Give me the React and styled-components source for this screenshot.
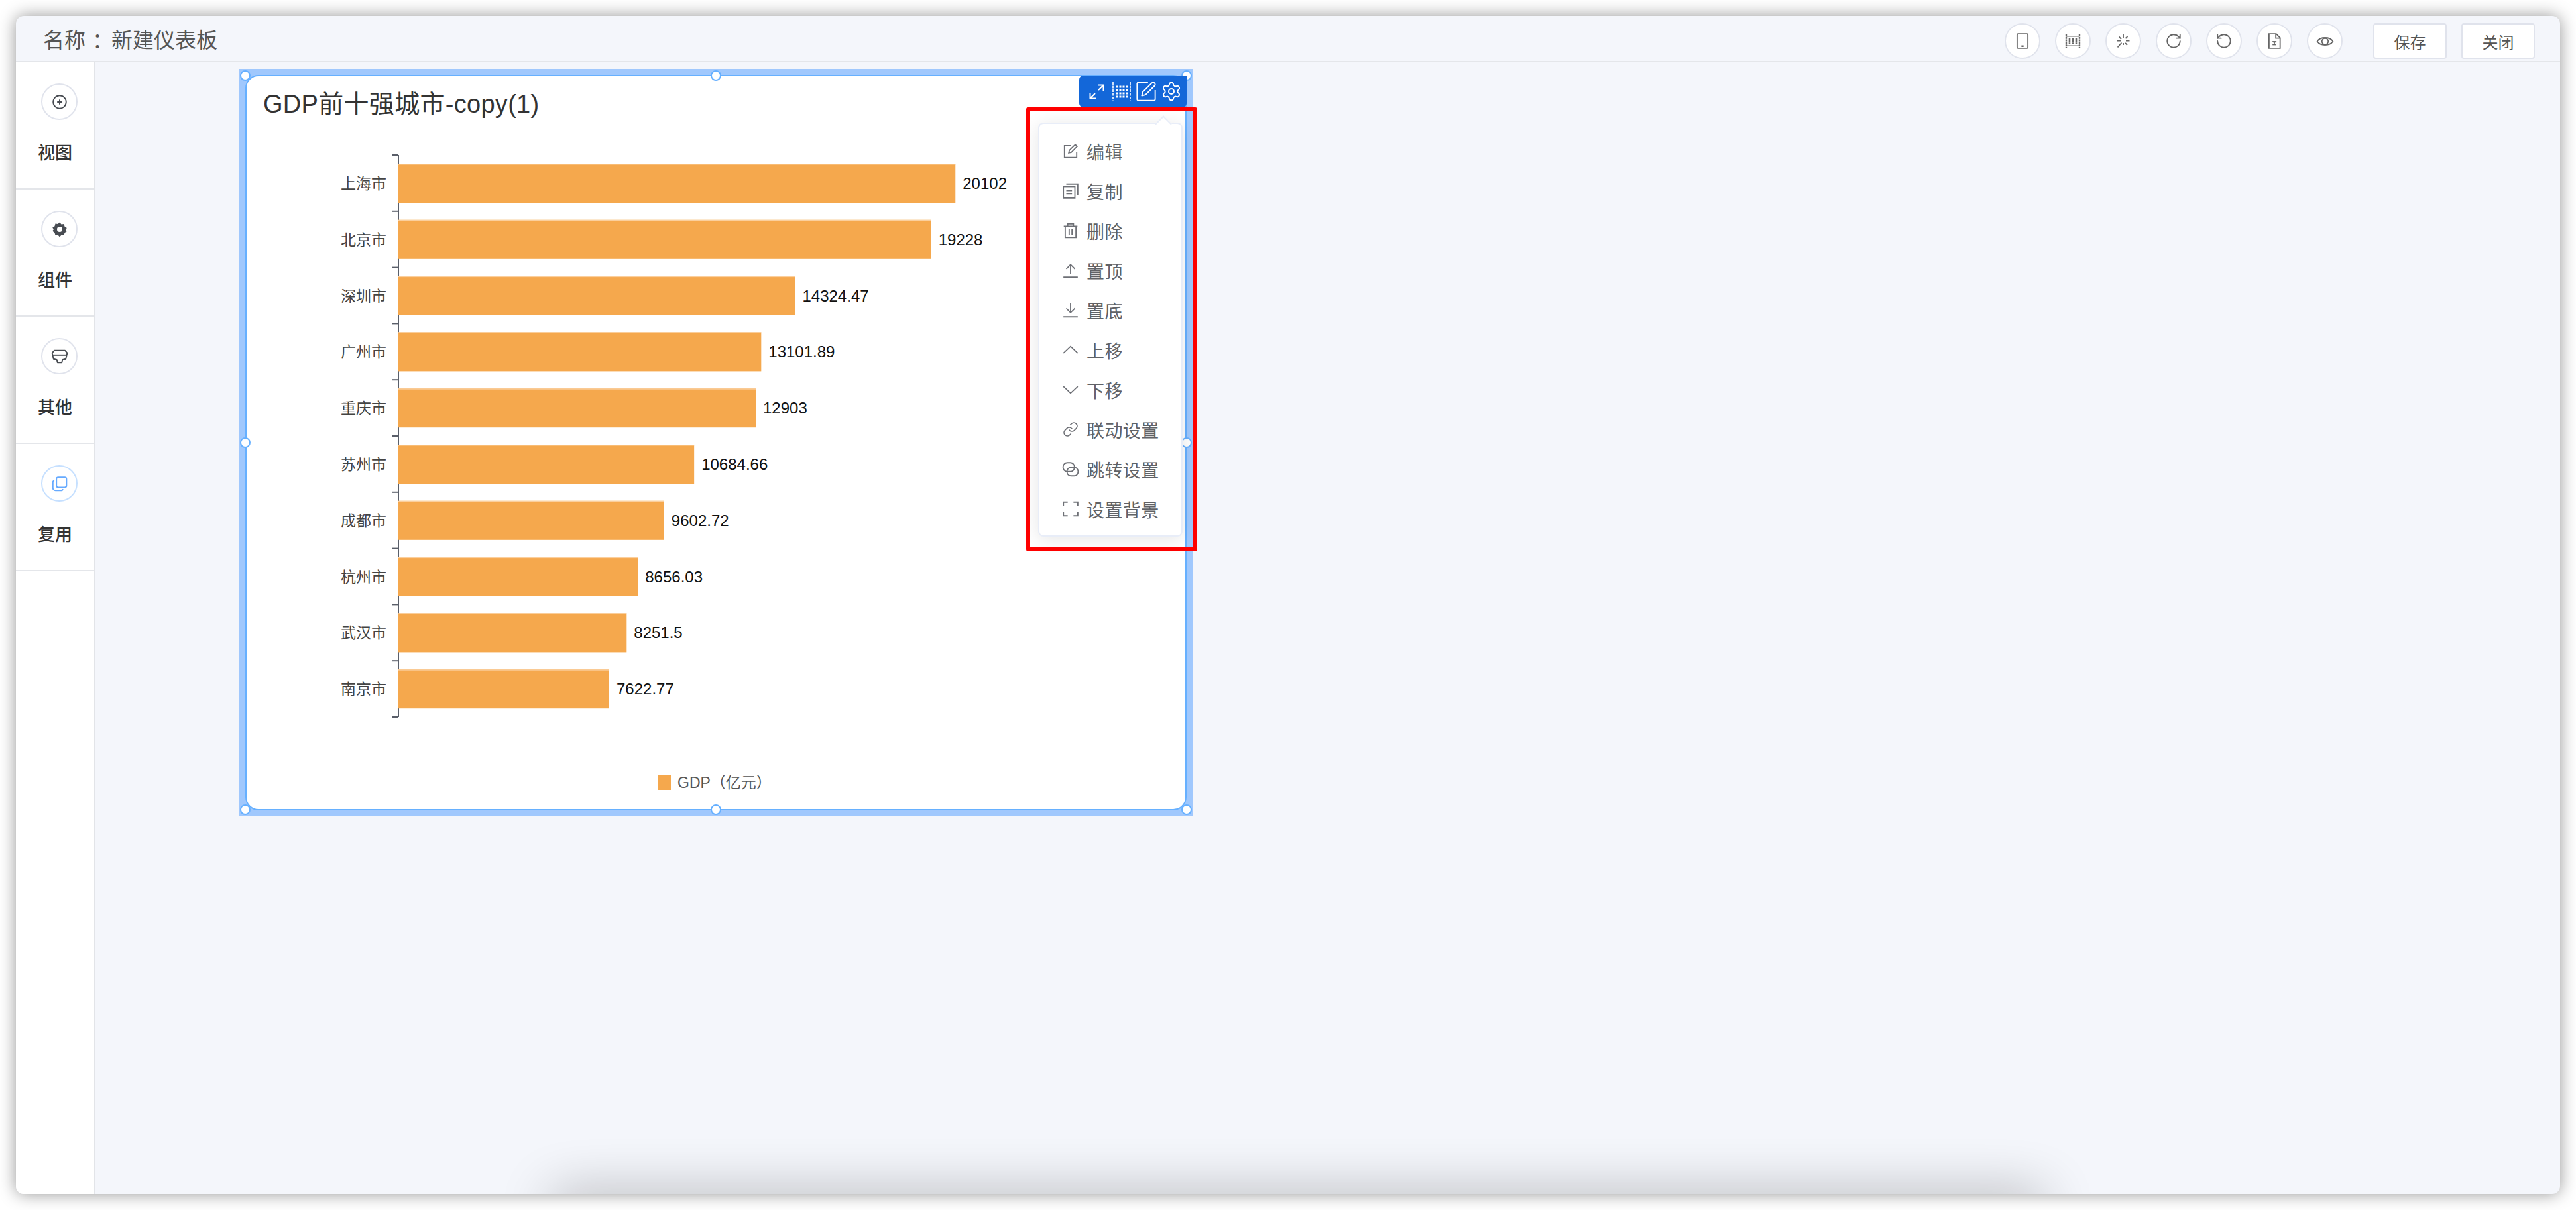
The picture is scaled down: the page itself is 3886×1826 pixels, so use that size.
import React from "react";
import styled, { createGlobalStyle } from "styled-components";
import { Link, Settings, RotateCw, RotateCcw } from "lucide-react";

const FONT = `"Liberation Sans", "Noto Sans CJK SC", sans-serif`;

const GlobalStyle = createGlobalStyle`
  html, body {
    margin: 0;
    padding: 0;
    background: #fff;
  }
  body {
    font-family: ${FONT};
  }
  * {
    box-sizing: border-box;
  }
`;

const cities = [
  { name: "上海市", value: 20102 },
  { name: "北京市", value: 19228 },
  { name: "深圳市", value: 14324.47 },
  { name: "广州市", value: 13101.89 },
  { name: "重庆市", value: 12903 },
  { name: "苏州市", value: 10684.66 },
  { name: "成都市", value: 9602.72 },
  { name: "杭州市", value: 8656.03 },
  { name: "武汉市", value: 8251.5 },
  { name: "南京市", value: 7622.77 },
];

const Svg = ({ size = 26, children, sw = 1.6 }) => (
  <svg
    width={size}
    height={size}
    viewBox="0 0 24 24"
    fill="none"
    stroke="currentColor"
    strokeWidth={sw}
  >
    {children}
  </svg>
);

const PhoneIcon = () => (
  <Svg size={26} sw={1.7}>
    <rect x="4.5" y="2" width="15" height="20" rx="1.2" />
    <path d="M10.5 19.2h3" strokeWidth="2.2" />
  </Svg>
);

const ColumnsIcon = () => (
  <svg width="26" height="26" viewBox="0 0 26 26" fill="none" stroke="currentColor">
    <path d="M3 3v20M23 3v20" strokeWidth="2.4" strokeDasharray="3 0.8" />
    <path d="M3 6h20M3 20h20" strokeWidth="1" />
    {[8, 13, 18].map((x) => (
      <path key={x} d={`M${x} 8v10`} strokeWidth="2.6" strokeDasharray="3 0.6" />
    ))}
  </svg>
);

const ClearIcon = () => (
  <Svg size={24} sw={1.8}>
    <path d="M12 2v5M12 15v3M5.5 5.5l3.5 3.5M18.5 5l-3 3M3 11.5h5M16 11.5h5.5M9.5 14.500L3.5 21.5M15 15l3 3" />
  </Svg>
);

const FileIcon = () => (
  <Svg size={26} sw={1.7}>
    <path d="M4.5 2h10l5.500 5.500V22H4.5z" />
    <path d="M14 2v6h6" />
    <path d="M9.5 12.5h5l-5 5h5z" fill="currentColor" strokeWidth="0.8" />
  </Svg>
);

const EyeIcon = () => (
  <Svg size={27} sw={1.6}>
    <path d="M1.5 12C5.5 5.5 18.5 5.5 22.5 12 18.5 18.5 5.5 18.5 1.5 12z" />
    <circle cx="12" cy="12" r="4.2" />
  </Svg>
);

const ViewIcon = () => (
  <Svg size={26} sw={1.8}>
    <circle cx="12" cy="12" r="9" />
    <path d="M12 8.5v7M8.5 12h7" />
  </Svg>
);

const PartIcon = () => (
  <svg width="24" height="24" viewBox="0 0 24 24">
    <path
      fill="#484c52"
      fillRule="evenodd"
      d="M12 1.5l2.6 3 3.9-.6 1 3.8 3.3 2.3-1.8 2.5 1.8 2.5-3.3 2.3-1 3.8-3.9-.6-2.6 3-2.6-3-3.9.6-1-3.8L1.2 14.500 3 12 1.2 9.5l3.3-2.3 1-3.8 3.9.6zM12 8a4 4 0 1 0 0 8 4 4 0 0 0 0-8z"
    />
  </svg>
);

const OtherIcon = () => (
  <Svg size={26} sw={1.8}>
    <path d="M4.5 3.5h15l3 3.5-2 8.5-4.5 1-1 4h-6l-1-4-4.500-1-2-8.500z" strokeLinejoin="round" />
    <path d="M2 10h20" />
  </Svg>
);

const ReuseIcon = () => (
  <Svg size={26} sw={1.9}>
    <rect x="7.5" y="3" width="14" height="14" rx="2.5" />
    <path d="M4.5 7.5c-1.2.4-2 1.5-2 2.8v7.500c0 2 1.7 3.7 3.7 3.7h7.500c1.3 0 2.4-.8 2.8-2" />
  </Svg>
);

const EditIcon = () => (
  <Svg sw={1.7}>
    <path d="M20.5 13v8h-17V4.5h9" />
    <path d="M9.5 14.5l.8-3.5L18.5 3l2.6 2.6-8 8.2z" />
  </Svg>
);

const CopyIcon = () => (
  <Svg sw={1.7}>
    <rect x="2" y="6" width="16" height="16" />
    <path d="M6 2.5h16v15.500M6 11.5h8M6 16h8" />
  </Svg>
);

const TrashIcon = () => (
  <Svg sw={1.7}>
    <path d="M2.5 6h19M8 6V2.5h8V6M4.5 6v15.500h15V6M10 10v7.500M14 10v7.500" />
  </Svg>
);

const TopIcon = () => (
  <Svg sw={1.7}>
    <path d="M2 21.5h20M12 17V4M6 10l6-6 6 6" />
  </Svg>
);

const BottomIcon = () => (
  <Svg sw={1.7}>
    <path d="M2 21.5h20M12 2v13M6 9.5l6 6 6-6" />
  </Svg>
);

const UpIcon = () => (
  <Svg sw={1.6}>
    <path d="M2 16.5L12 7l10 9.500" />
  </Svg>
);

const DownIcon = () => (
  <Svg sw={1.6}>
    <path d="M2 7.5L12 17 22 7.5" />
  </Svg>
);

const JumpIcon = () => (
  <Svg sw={1.7}>
    <rect x="1.5" y="3" width="16" height="12.5" rx="6" />
    <rect x="7" y="9.5" width="15.5" height="12" rx="5.5" />
  </Svg>
);

const FrameIcon = () => (
  <Svg sw={1.8}>
    <path d="M2 8V2.5h6M16 2.5h6V8M22 16v5.500h-6M8 21.5H2V16" />
  </Svg>
);

const ExpandIcon = () => (
  <svg width="23" height="23" viewBox="0 0 23 23" fill="none" stroke="currentColor" strokeWidth="2">
    <path d="M13 1.5h8.5V10M21 2l-7 7M1.5 13v8.500H10M2 21l7-7" />
  </svg>
);

const DotGridIcon = () => (
  <svg width="30" height="28" viewBox="0 0 30 28" fill="none" stroke="currentColor">
    <path d="M2 0v28M28 0v28" strokeWidth="2" strokeDasharray="4 1.5" opacity="0.8" />
    {[7, 12, 17, 22].map((y) =>
      [8, 13, 18, 23].map((x) => (
        <rect key={`${x}-${y}`} x={x - 1.5} y={y - 1.5} width="3" height="3" fill="currentColor" stroke="none" />
      ))
    )}
  </svg>
);

const PenSquareIcon = () => (
  <svg width="32" height="32" viewBox="0 0 34 34" fill="none" stroke="currentColor" strokeWidth="2">
    <path d="M20 2.5H4.5a2 2 0 0 0-2 2v25a2 2 0 0 0 2 2h25a2 2 0 0 0 2-2V15" />
    <path d="M10 24l1.5-6L26 3.5a2.5 2.5 0 0 1 4.500 4.500L16 22.500z" strokeLinejoin="round" />
  </svg>
);

const menuItems = [
  { label: "编辑", icon: <EditIcon /> },
  { label: "复制", icon: <CopyIcon /> },
  { label: "删除", icon: <TrashIcon /> },
  { label: "置顶", icon: <TopIcon /> },
  { label: "置底", icon: <BottomIcon /> },
  { label: "上移", icon: <UpIcon /> },
  { label: "下移", icon: <DownIcon /> },
  { label: "联动设置", icon: <Link size={24} strokeWidth={1.7} /> },
  { label: "跳转设置", icon: <JumpIcon /> },
  { label: "设置背景", icon: <FrameIcon /> },
];

const sideItems = [
  { label: "视图", icon: <ViewIcon /> },
  { label: "组件", icon: <PartIcon /> },
  { label: "其他", icon: <OtherIcon /> },
  { label: "复用", icon: <ReuseIcon />, active: true },
];

const toolIcons = [
  <PhoneIcon key="phone" />,
  <ColumnsIcon key="columns" />,
  <ClearIcon key="clear" />,
  <RotateCw key="redo" size={26} strokeWidth={1.7} />,
  <RotateCcw key="undo" size={26} strokeWidth={1.7} />,
  <FileIcon key="file" />,
  <EyeIcon key="eye" />,
];

const handles = [
  { x: 0, y: 0 },
  { x: 50, y: 0 },
  { x: 100, y: 0 },
  { x: 0, y: 50 },
  { x: 100, y: 50 },
  { x: 0, y: 100 },
  { x: 50, y: 100 },
  { x: 100, y: 100 },
];

const AXIS_X = 229;
const BAR_SCALE = 0.04185;

const BarChart = () => (
  <ChartSvg width="1420" height="1040" viewBox="0 0 1420 1040">
    <path d={`M${AXIS_X} 62V910`} stroke="#5a5f6a" strokeWidth="2" fill="none" />
    {Array.from({ length: 11 }).map((_, i) => (
      <path
        key={i}
        d={`M${AXIS_X - 10} ${62 + i * 84.8}H${AXIS_X}`}
        stroke="#5a5f6a"
        strokeWidth="2"
      />
    ))}
    {cities.map((c, i) => {
      const top = 75 + i * 84.8;
      const w = c.value * BAR_SCALE;
      return (
        <g key={c.name}>
          <rect x={AXIS_X - 1} y={top} width={w} height="59" fill="#f5a84d" />
          <rect x={AXIS_X - 1} y={top} width={w} height="1.5" fill="#fbcf9d" />
          <text x={AXIS_X - 18} y={top + 38} textAnchor="end" fontSize="23" fill="#444">
            {c.name}
          </text>
          <text x={AXIS_X + w + 10} y={top + 38} fontSize="24" fill="#111">
            {c.value}
          </text>
        </g>
      );
    })}
    <rect x={620} y={998} width="20" height="22" fill="#f5a84d" />
    <text x={650} y={1017} fontSize="23" fill="#555">
      GDP（亿元）
    </text>
  </ChartSvg>
);

export default function App() {
  return (
    <>
      <GlobalStyle />
      <Page>
        <Window>
          <Header>
            <PageName>
              名称<NameColon>：</NameColon>
              <NameValue>新建仪表板</NameValue>
            </PageName>
            <HeaderTools>
              <ToolGroup>
                {toolIcons.map((icon) => (
                  <ToolCircle key={icon.key}>{icon}</ToolCircle>
                ))}
              </ToolGroup>
              <ButtonGroup>
                <HeaderButton>保存</HeaderButton>
                <HeaderButton>关闭</HeaderButton>
              </ButtonGroup>
            </HeaderTools>
          </Header>
          <Body>
            <Sidebar>
              {sideItems.map((item) => (
                <SideItem key={item.label}>
                  <SideCircle $active={item.active}>{item.icon}</SideCircle>
                  <SideLabel>{item.label}</SideLabel>
                </SideItem>
              ))}
            </Sidebar>
            <Canvas>
              <Selection>
                <Card>
                  <CardTitle>GDP前十强城市-copy(1)</CardTitle>
                  <BarChart />
                </Card>
                {handles.map((h) => (
                  <Handle key={`${h.x}-${h.y}`} $x={h.x} $y={h.y} />
                ))}
                <CardToolbar>
                  <ExpandIcon />
                  <DotGridIcon />
                  <PenSquareIcon />
                  <Settings size={32} strokeWidth={1.5} />
                </CardToolbar>
              </Selection>
              <Callout>
                <Menu>
                  {menuItems.map((item) => (
                    <MenuRow key={item.label}>
                      <MenuIcon>{item.icon}</MenuIcon>
                      {item.label}
                    </MenuRow>
                  ))}
                </Menu>
              </Callout>
              <BottomShade />
            </Canvas>
          </Body>
        </Window>
      </Page>
    </>
  );
}

const Page = styled.div`
  width: 3886px;
  height: 1826px;
  padding: 24px;
  background: #fff;
  overflow: hidden;
`;

const Window = styled.div`
  display: flex;
  flex-direction: column;
  width: 3838px;
  height: 1778px;
  border-radius: 12px;
  background: #f4f6fb;
  box-shadow: 0 0 26px rgba(0, 0, 0, 0.42);
  overflow: hidden;
`;

const Header = styled.header`
  display: flex;
  flex: none;
  align-items: center;
  justify-content: space-between;
  height: 70px;
  padding: 0 38px 0 41px;
  border-bottom: 2px solid #e4e6ea;
`;

const PageName = styled.div`
  font-size: 32px;
  color: #555;
`;

const NameColon = styled.span`
  margin-left: 10px;
`;

const NameValue = styled.span`
  margin-left: -3px;
`;

const HeaderTools = styled.div`
  display: flex;
  align-items: center;
  gap: 46px;
  margin-top: 8px;
`;

const ToolGroup = styled.div`
  display: flex;
  gap: 22px;
`;

const ToolCircle = styled.div`
  display: flex;
  align-items: center;
  justify-content: center;
  width: 54px;
  height: 54px;
  border: 2px solid #e0e3ec;
  border-radius: 50%;
  background: #fff;
  color: #666;
`;

const ButtonGroup = styled.div`
  display: flex;
  gap: 22px;
`;

const HeaderButton = styled.div`
  display: flex;
  align-items: center;
  justify-content: center;
  width: 111px;
  height: 54px;
  border: 2px solid #e0e3ec;
  border-radius: 4px;
  background: #fff;
  font-size: 24px;
  color: #555;
`;

const Body = styled.div`
  display: flex;
  flex: 1;
  min-height: 0;
`;

const Sidebar = styled.aside`
  flex: none;
  width: 120px;
  background: #fff;
  border-right: 2px solid #e2e4e8;
`;

const SideItem = styled.div`
  display: flex;
  flex-direction: column;
  height: 192px;
  padding: 32px 0 0 38px;
  border-bottom: 2px solid #e4e6ea;
`;

const SideCircle = styled.div`
  display: flex;
  align-items: center;
  justify-content: center;
  width: 55px;
  height: 55px;
  border: 2px solid ${(p) => (p.$active ? "#c6e0ff" : "#e0e3ec")};
  border-radius: 50%;
  color: ${(p) => (p.$active ? "#66aaff" : "#484c52")};
`;

const SideLabel = styled.div`
  margin: 32px 0 0 -5px;
  font-size: 26px;
  line-height: 36px;
  font-weight: 500;
  color: #333;
`;

const Canvas = styled.main`
  position: relative;
  flex: 1;
  min-width: 0;
`;

const Selection = styled.div`
  position: absolute;
  left: 216px;
  top: 10px;
  width: 1440px;
  height: 1128px;
  padding: 9px 10px;
  background: #a0c8fd;
`;

const Card = styled.div`
  width: 100%;
  height: 100%;
  border: 2px solid #66b0ff;
  border-radius: 20px;
  background: #fff;
`;

const CardTitle = styled.div`
  padding: 20px 0 0 25px;
  font-size: 38px;
  line-height: 44px;
  letter-spacing: 0.3px;
  color: #333;
`;

const ChartSvg = styled.svg`
  display: block;
  margin-top: -7px;
  font-family: ${FONT};
`;

const Handle = styled.span`
  position: absolute;
  left: calc(10px + (100% - 20px) * ${(p) => p.$x / 100});
  top: calc(10px + (100% - 20px) * ${(p) => p.$y / 100});
  width: 16px;
  height: 16px;
  margin: -8px 0 0 -8px;
  border: 2px solid #66b0ff;
  border-radius: 50%;
  background: #fff;
`;

const CardToolbar = styled.div`
  position: absolute;
  top: 10px;
  right: 10px;
  display: flex;
  align-items: center;
  gap: 6px;
  width: 162px;
  height: 48px;
  padding: 0 0 0 15px;
  border-radius: 6px 0 6px 6px;
  background: #1367d9;
  color: #fff;

  > svg:first-child {
    margin-right: 5px;
  }
`;

const Callout = styled.div`
  position: absolute;
  left: 1404px;
  top: 68px;
  width: 258px;
  height: 670px;
  padding: 17px 16px 16px 12px;
  border: 6px solid #f00;
  border-radius: 3px;
`;

const Menu = styled.div`
  position: relative;
  width: 218px;
  height: 625px;
  padding: 11px 0 0 34px;
  border: 2px solid #e8edf8;
  border-radius: 8px;
  background: #fff;
  box-shadow: 0 4px 28px rgba(0, 0, 0, 0.1);

  &::before {
    content: "";
    position: absolute;
    top: -9px;
    left: 178px;
    width: 16px;
    height: 16px;
    background: #fff;
    border-left: 2px solid #e8edf8;
    border-top: 2px solid #e8edf8;
    transform: rotate(45deg);
  }
`;

const MenuRow = styled.div`
  display: flex;
  align-items: center;
  gap: 11px;
  height: 60px;
  font-size: 27px;
  letter-spacing: 0.4px;
  color: #606266;
  white-space: nowrap;
`;

const MenuIcon = styled.span`
  display: flex;
  align-items: center;
  justify-content: center;
  width: 26px;
  color: #6e7076;
`;

const BottomShade = styled.div`
  position: absolute;
  left: 690px;
  right: 780px;
  bottom: -44px;
  height: 44px;
  box-shadow: 0 0 80px 0 rgba(0, 0, 0, 0.32);
`;
